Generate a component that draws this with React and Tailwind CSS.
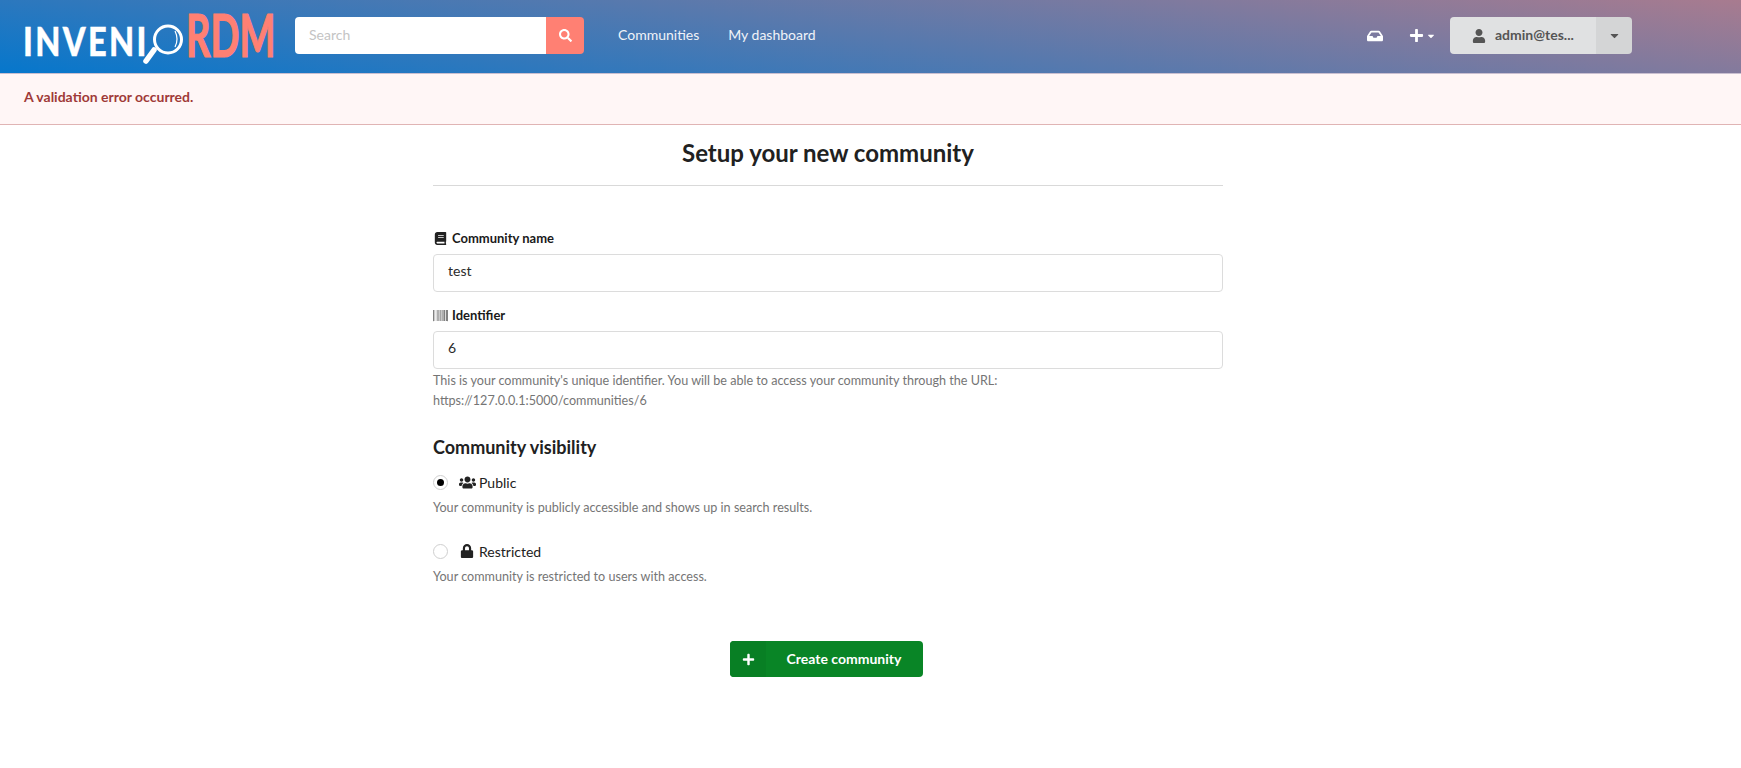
import React from "react";
import { FaBook, FaBarcode, FaUsers, FaLock, FaPlus, FaSearch, FaUser, FaInbox, FaCaretDown } from "react-icons/fa";

function Logo() {
  return (
    <svg width="252" height="60" viewBox="0 0 252 60" className="shrink-0 overflow-visible">
      <text transform="translate(-1 49) scale(.835 1)" fill="#fff" stroke="#fff" strokeWidth=".4" fontFamily="Lato" fontWeight="900" fontSize="39" letterSpacing="2.8">INVENI</text>
      <circle cx="144" cy="32.5" r="13.5" fill="none" stroke="#fff" strokeWidth="3" />
      <path d="M151 24 q4 8 0 16" fill="none" stroke="#fff" strokeWidth="1.2" />
      <path d="M130 43 L122 54" stroke="#fff" strokeWidth="5.5" strokeLinecap="round" />
      <text transform="translate(162 49.5) scale(.635 1)" fill="#ff8073" stroke="#ff8073" strokeWidth="1.2" fontFamily="Lato" fontWeight="700" fontSize="60">RDM</text>
    </svg>
  );
}

function Field({ icon, label, value, className }) {
  return (
    <div className={className}>
      <label className="flex items-center h-[17px] text-[13px] font-bold text-[#1a1a1a]">
        {icon}
        {label}
      </label>
      <div className="mt-[7px] h-[38px] w-full rounded-[4px] border border-[#dcdcdc] bg-white pl-[14px] pb-[5px] flex items-center text-[14px] text-[#2b2b2b]">{value}</div>
    </div>
  );
}

function Radio({ checked, icon, label, help, className }) {
  return (
    <div className={className}>
      <div className="flex items-center h-[20px] text-[14px] text-[#212121]">
        <span className={`w-[15px] h-[15px] rounded-full border border-[#cfcfcf] bg-white flex items-center justify-center shrink-0 ${checked ? "border-[#9a9a9a]" : ""}`}>
          {checked && <span className="w-[7px] h-[7px] rounded-full bg-black" />}
        </span>
        {icon}
        {label}
      </div>
      <p className="mt-[6px] text-[12.6px] leading-[20px] text-[#757575]">{help}</p>
    </div>
  );
}

export default function App() {
  return (
    <div className="min-h-[768px] bg-white font-['Lato',sans-serif] text-[14px]">
      <header className="h-[74px] border-b border-[#c9bfd0] bg-[linear-gradient(8deg,#0677cc_0%,#a87b8f_100%)] flex items-center pl-[24px]">
        <Logo />
        <div className="ml-[19px] flex h-[37px] w-[289px] -mt-[2px]">
          <div className="flex-1 rounded-l-[4px] bg-white pl-[14px] pb-[3px] flex items-center text-[14px] text-[#c4c4c4]">Search</div>
          <button className="w-[38px] rounded-r-[4px] bg-[#ff8073] flex items-center justify-center text-white"><FaSearch size={13} /></button>
        </div>
        <nav className="ml-[34px] flex gap-[29px] text-[14px] text-[#f0f3f8] -mt-[5px]">
          <span>Communities</span>
          <span>My dashboard</span>
        </nav>
        <div className="ml-auto mr-[109px] flex items-center text-white -mt-[2px]">
          <FaInbox size={16} />
          <span className="ml-[26px] flex items-center">
            <FaPlus size={15} />
            <FaCaretDown size={10} className="ml-[2px]" />
          </span>
          <div className="ml-[14px] flex h-[37px] w-[182px] rounded-[4px] overflow-hidden text-[#555555]">
            <div className="flex-1 bg-[#e0e1e2] flex items-center pl-[22px] text-[14px] font-bold">
              <FaUser size={14} />
              <span className="ml-[9px] pb-[2px]">admin@tes...</span>
            </div>
            <div className="w-[36px] bg-[#d4d5d6] flex items-center justify-center"><FaCaretDown size={13} /></div>
          </div>
        </div>
      </header>

      <div className="h-[51px] border-b border-[#e0b4b4] bg-[#fff6f6] pl-[24px] pb-[6px] flex items-center text-[14px] font-bold text-[#9f3a38]">A validation error occurred.</div>

      <main className="ml-[433px] w-[790px]">
        <h1 className="pt-[13px] pb-[17px] text-center text-[24px] leading-[30px] font-bold text-[#212121] border-b border-[#d9d9d9]">Setup your new community</h1>

        <Field className="mt-[44px]" icon={<FaBook size={13} className="mr-[5px] ml-[1px] text-[#222]" />} label="Community name" value="test" />
        <Field className="mt-[15px]" icon={<FaBarcode size={15} className="mr-[4px] text-[#555]" />} label="Identifier" value="6" />
        <p className="mt-[2px] w-[600px] text-[12.6px] leading-[20px] text-[#757575]">This is your community's unique identifier. You will be able to access your community through the URL: https://127.0.0.1:5000/communities/6</p>

        <h2 className="mt-[24px] text-[18px] leading-[24px] font-bold text-[#212121]">Community visibility</h2>
        <Radio className="mt-[13px]" checked icon={<FaUsers size={17} className="ml-[11px] mr-[3px] text-[#222]" />} label="Public" help="Your community is publicly accessible and shows up in search results." />
        <Radio className="mt-[23px]" icon={<FaLock size={14} className="ml-[12px] mr-[5px] text-[#222]" />} label="Restricted" help="Your community is restricted to users with access." />

        <div className="mt-[54px] ml-[297px] flex h-[36px] w-[193px] rounded-[4px] overflow-hidden bg-[#098526] text-white text-[14px] font-bold">
          <span className="w-[36px] bg-[#087f24] flex items-center justify-center"><FaPlus size={13} /></span>
          <span className="flex-1 flex items-center justify-center pr-[1px] pb-[2px]">Create community</span>
        </div>
      </main>
    </div>
  );
}
